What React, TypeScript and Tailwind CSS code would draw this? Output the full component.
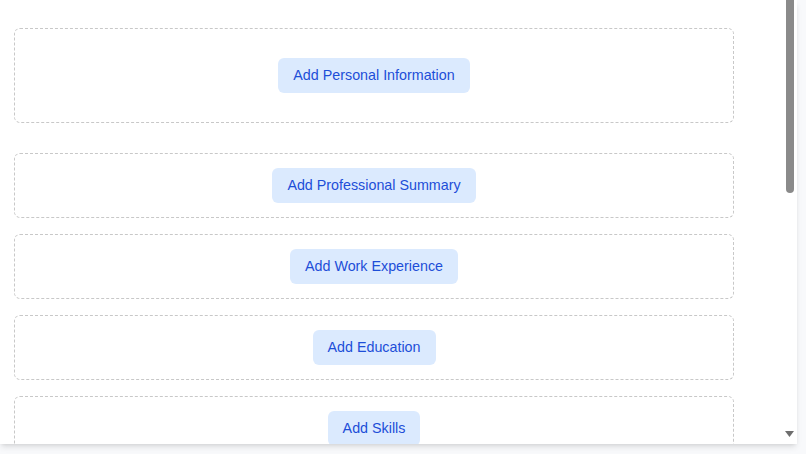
import React from 'react';

const sections = [
  'Add Professional Summary',
  'Add Work Experience',
  'Add Education',
  'Add Skills',
  'Add Projects',
  'Add Certifications',
  'Add Languages',
  'Add Interests',
  'Add Awards',
  'Add References',
];

const AddButton: React.FC<{ label: string }> = ({ label }) => (
  <button className="h-[35px] rounded-md bg-[#dbeafe] px-[15px] text-[14.3px] leading-none text-[#1d4ed8]">
    {label}
  </button>
);

// drawn scrollbar track, since the headless browser hides the native one
const ScrollTrack: React.FC = () => (
  <div className="flex h-full w-[15px] shrink-0 flex-col items-center bg-white">
    <div className="h-[193px] w-[8px] rounded-b-full bg-[#8a8a8a]" />
    <div className="flex-1" />
    <svg width="9" height="7" viewBox="0 0 9 7" className="mb-[6px]">
      <path d="M0 0 H9 L4.5 6 Z" fill="#6e6e6e" />
    </svg>
  </div>
);

export default function App() {
  return (
    <div
      className="h-[454px] w-[806px] bg-[#f8f9fb]"
      style={{ fontFamily: '"Liberation Sans", Arial, sans-serif' }}
    >
      <div className="flex h-[444px] w-[797px] bg-white shadow-md">
        <div className="w-[782px] overflow-hidden">
          <div className="flex flex-col pl-[14px] pt-[28px] pb-5">
            <div className="mb-[30px] flex h-[95px] w-[720px] items-center justify-center rounded-md border border-dashed border-[#c8c8c8]">
              <AddButton label="Add Personal Information" />
            </div>
            <div className="flex flex-col gap-4">
              {sections.map((s) => (
                <div
                  key={s}
                  className="flex h-[65px] w-[720px] items-center justify-center rounded-md border border-dashed border-[#c8c8c8]"
                >
                  <AddButton label={s} />
                </div>
              ))}
            </div>
          </div>
        </div>
        <ScrollTrack />
      </div>
    </div>
  );
}
